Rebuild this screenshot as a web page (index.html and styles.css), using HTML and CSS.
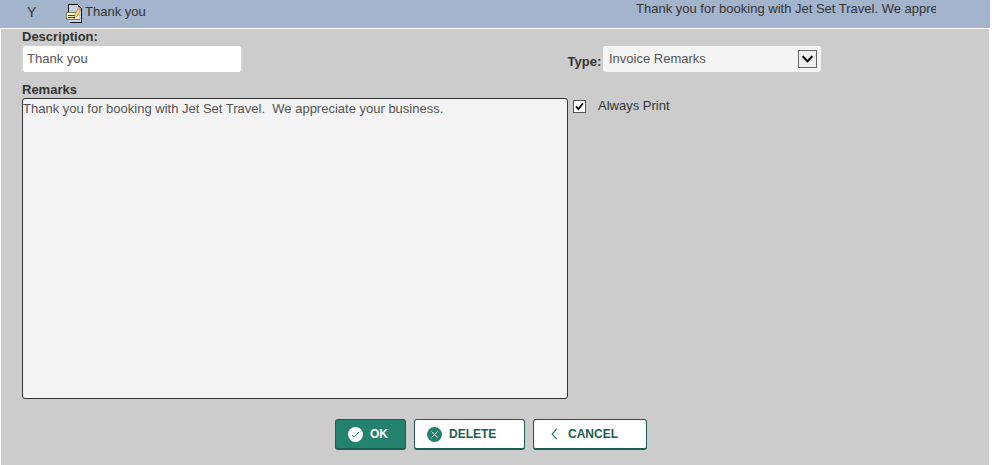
FILE: index.html
```
<!DOCTYPE html>
<html lang="en">
<head>
<meta charset="utf-8">
<title>Remarks</title>
<link rel="stylesheet" href="styles.css">
</head>
<body>
<header class="row">
  <span class="flag">Y</span>
  <svg class="note" width="18" height="19" viewBox="0 0 18 19" shape-rendering="crispEdges">
    <path d="M4 1h9l4 4v13H4z" fill="#c3d3e4"/>
    <path d="M3 0h10v1H4v7H3zM13 1h1v1h1v1h1v1h1v15H5v-1h11V5h-3z" fill="#111"/>
    <path d="M1 8h13v8H1z" fill="#fbf6c0"/>
    <path d="M1 8h13v1H1zM1 8h1v8H1zM1 15h14v1H1z" fill="#77775f"/>
    <path d="M3 11h7v1H3zM3 13h6v1H3z" fill="#3c3c30"/>
    <path d="M9 14.5l.8-4L13 4.500l2.600 1.500-3.300 6z" fill="#f6cf7c" stroke="#a9733c" stroke-width=".6" shape-rendering="auto"/>
    <path d="M13 3h2v1h1v2h-1V5h-2z" fill="#dc9090"/>
    <path d="M9 13h1v1H9z" fill="#222"/>
  </svg>
  <span class="name">Thank you</span>
  <span class="preview">Thank you for booking with Jet Set Travel. We appreciate your business.</span>
</header>
<main class="form">
  <div class="top">
    <div class="field">
      <div class="label">Description:</div>
      <div class="input">Thank you</div>
    </div>
    <div class="type">
      <span class="label">Type:</span>
      <div class="select"><span class="value">Invoice Remarks</span>
        <span class="arrow"><svg width="11" height="8" viewBox="0 0 11 8"><path d="M.6 1.200l4.900 5 4.900-5" fill="none" stroke="#000" stroke-width="2"/></svg></span>
      </div>
    </div>
  </div>
  <div class="label remarks">Remarks</div>
  <div class="body">
    <div class="area">Thank you for booking with Jet Set Travel.&nbsp; We appreciate your business.</div>
    <div class="check">
      <span class="box"><svg width="9" height="9" viewBox="0 0 9 9"><path d="M1 4.500l2.400 2.700L8 1.300" fill="none" stroke="#000" stroke-width="1.800"/></svg></span>
      <span class="print">Always Print</span>
    </div>
  </div>
  <div class="actions">
    <div class="btn ok"><svg width="15" height="15" viewBox="0 0 15 15"><circle cx="7.500" cy="7.500" r="7.500" fill="#fff"/><path d="M4 8l2.200 2L11 5" fill="none" stroke="#23826e"/></svg><span class="text">OK</span></div>
    <div class="btn delete"><svg width="15" height="15" viewBox="0 0 15 15"><circle cx="7.500" cy="7.500" r="7.500" fill="#23826e"/><path d="M4.500 4.500l6 6m0-6l-6 6" stroke="#d5e9e4"/></svg><span class="text">DELETE</span></div>
    <div class="btn cancel"><svg width="7" height="12" viewBox="0 0 7 12"><path d="M5.600.800L1.200 6l4.400 5.200" fill="none" stroke="#23826e" stroke-width="1.300"/></svg><span class="text">CANCEL</span></div>
  </div>
</main>
</body>
</html>
```
FILE: styles.css
```
* { box-sizing: border-box; }
body { margin: 0; background: #fff; color: #333; font: 13px/16px "Liberation Sans", Arial, sans-serif; overflow: hidden; }
svg { display: block; flex: none; }
.row { display: flex; width: 990px; height: 28px; background: #a3b4cd; white-space: nowrap; overflow: hidden; }
.flag { width: 65px; padding: 4px 0 0 27px; font-size: 14px; }
.note { margin-top: 4px; }
.name { width: 553px; padding: 4px 0 0 2px; }
.preview { width: 300px; padding-top: 1px; overflow: hidden; }
.form { width: 988px; height: 436px; margin: 1px 0 0 1px; padding-left: 21px; background: #ccc; }
.label { font-weight: bold; }
.top { display: flex; height: 53px; }
.field { width: 546px; }
.input { width: 220px; height: 26px; margin-top: 1px; padding: 5px 4px; background: #fff; border: 1px solid #d8d8d8; border-width: 0 1px; border-radius: 3px; color: #555; }
.type { display: flex; padding-top: 17px; }
.type .label { width: 35px; padding-top: 8px; margin-left: -0.5px; margin-right: 0.5px; }
.select { display: flex; justify-content: space-between; width: 218px; height: 26px; padding: 4px 4px 0 6px; background: #f4f4f4; border-radius: 3px; color: #555; }
.value { padding-top: 1px; }
.arrow { display: flex; align-items: center; justify-content: center; width: 19px; height: 18px; border: 1px solid #666; background: #eee; }
.remarks { height: 16px; }
.body { display: flex; }
.area { width: 546px; height: 301px; background: #f4f4f4; border: 1px solid #333; border-radius: 3px; color: #555; padding-top: 2px; white-space: nowrap; }
.check { display: flex; }
.box { display: flex; align-items: center; justify-content: center; width: 13px; height: 13px; margin: 2px 12px 0 5px; border: 1px solid #555; background: #fff; }
.actions { display: flex; gap: 8px; margin: 20px 0 0 313px; }
.btn { display: flex; align-items: center; height: 31px; background: #fff; border: 1px solid #1b5e50; border-bottom-width: 2px; border-radius: 3px; color: #1b5e50; font-size: 12px; font-weight: bold; padding-left: 12px; }
.text { margin-left: 7px; }
.ok { width: 71px; background: #23826e; color: #fff; }
.delete { width: 111px; }
.cancel { width: 114px; padding-left: 17px; }
.cancel .text { margin-left: 10px; }
```
